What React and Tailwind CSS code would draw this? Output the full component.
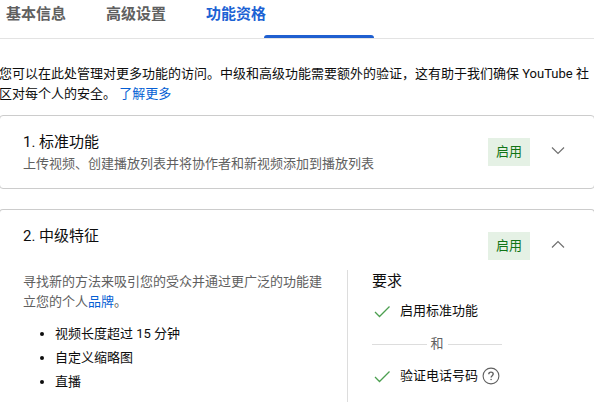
import { useState } from "react";

const tabs = ["基本信息", "高级设置", "功能资格"];

function Chevron({ open }) {
  return (
    <svg
      viewBox="0 0 24 24"
      className="size-6"
      fill="none"
      stroke="#707070"
      strokeWidth="1.2"
    >
      <path d={open ? "M6 13.5l6-6 6 6" : "M6 7.5l6 6 6-6"} />
    </svg>
  );
}

function Status({ open, onToggle, label }) {
  return (
    <div className="flex items-center gap-4 pr-6">
      <span className="bg-[#e5f1e5] px-2 text-[13px] leading-7 text-[#107516]">
        启用
      </span>
      <button type="button" aria-label={label} aria-expanded={open} onClick={onToggle}>
        <Chevron open={open} />
      </button>
    </div>
  );
}

function Requirement({ children }) {
  return (
    <div className="flex items-center gap-2 text-[13px] leading-5">
      <svg
        viewBox="0 0 20 20"
        className="size-5"
        fill="none"
        stroke="#4c9f50"
        strokeWidth="1.3"
      >
        <path d="M3 11l4.5 4.5L17.5 5.5" />
      </svg>
      {children}
    </div>
  );
}

function HelpIcon() {
  return (
    <svg
      viewBox="0 0 18 18"
      className="size-[18px]"
      fill="none"
      stroke="#606060"
    >
      <circle cx="9" cy="9" r="7.9" strokeWidth="1.1" />
      <path
        d="M6.8 7.2c0-1.3 1-2.1 2.2-2.1s2.2.8 2.2 2c0 1.5-2.1 1.7-2.1 3.4"
        strokeWidth="1.4"
      />
      <circle cx="9.1" cy="12.5" r="0.8" fill="#606060" stroke="none" />
    </svg>
  );
}

function App() {
  const [standardOpen, setStandardOpen] = useState(false);
  const [middleOpen, setMiddleOpen] = useState(true);

  return (
    <div className="overflow-hidden bg-white font-['Roboto','Noto_Sans_CJK_SC',sans-serif] text-[#0d0d0d]">
      <nav className="relative flex h-[39px] gap-10 border-b border-[#e3e3e3] pl-[6px]">
        {tabs.map((tab) => (
          <button
            key={tab}
            type="button"
            className={
              tab === "功能资格"
                ? "h-7 text-[15px] leading-7 font-bold text-[#1c62d4]"
                : "h-7 text-[15px] leading-7 font-bold text-[#606060]"
            }
          >
            {tab}
          </button>
        ))}
        <span className="absolute bottom-0 left-[264px] h-[3px] w-[110px] rounded-t-sm bg-[#1f5fd0]" />
      </nav>

      <p className="-ml-px mt-[25px] text-[13px] leading-5">
        您可以在此处管理对更多功能的访问。中级和高级功能需要额外的验证，这有助于我们确保
        YouTube 社区对每个人的安全。{" "}
        <a href="#learn" className="text-[#065fd4]">
          了解更多
        </a>
      </p>

      <section className="-mx-px mt-[11px] flex items-start justify-between rounded border border-[#cccccc] pt-4 pb-3 pl-[23px]">
        <div>
          <h2 className="text-[15px] leading-5">1. 标准功能</h2>
          <p className="text-[13px] leading-6 text-[#606060]">
            上传视频、创建播放列表并将协作者和新视频添加到播放列表
          </p>
        </div>
        <div className="pt-[6px]">
          <Status
            label="标准功能"
            open={standardOpen}
            onToggle={() => setStandardOpen(!standardOpen)}
          />
        </div>
      </section>

      <section className="-mx-px mt-5 rounded-t border border-b-0 border-[#cccccc] pt-4 pb-1 pl-[23px]">
        <div className="flex items-start justify-between">
          <h2 className="text-[15px] leading-5">2. 中级特征</h2>
          <div className="pt-[6px]">
            <Status
              label="中级特征"
              open={middleOpen}
              onToggle={() => setMiddleOpen(!middleOpen)}
            />
          </div>
        </div>

        {middleOpen && (
          <div className="mt-[10px] grid grid-cols-[324px_1fr]">
            <div className="pt-[2px] pr-6 pb-2 text-[13px]">
              <p className="leading-5 text-[#606060]">
                寻找新的方法来吸引您的受众并通过更广泛的功能建立您的个人
                <a href="#brand" className="text-[#065fd4]">
                  品牌
                </a>
                。
              </p>
              <ul className="mt-[10px] list-disc pl-8 leading-6">
                <li>视频长度超过 15 分钟</li>
                <li>自定义缩略图</li>
                <li>直播</li>
              </ul>
            </div>

            <div className="border-l border-[#dddddd] pl-6">
              <h3 className="text-[15px] leading-[22px]">要求</h3>
              <div className="mt-[9px]">
                <Requirement>启用标准功能</Requirement>
              </div>
              <div className="mt-[13px] mb-3 flex w-[130px] items-center gap-1 text-[13px] leading-5 text-[#606060]">
                <span className="h-px flex-1 bg-[#dddddd]" />
                和
                <span className="h-px flex-1 bg-[#dddddd]" />
              </div>
              <Requirement>
                <span className="flex items-center gap-1">
                  验证电话号码
                  <button type="button" aria-label="帮助">
                    <HelpIcon />
                  </button>
                </span>
              </Requirement>
            </div>
          </div>
        )}
      </section>
    </div>
  );
}

export default App;
